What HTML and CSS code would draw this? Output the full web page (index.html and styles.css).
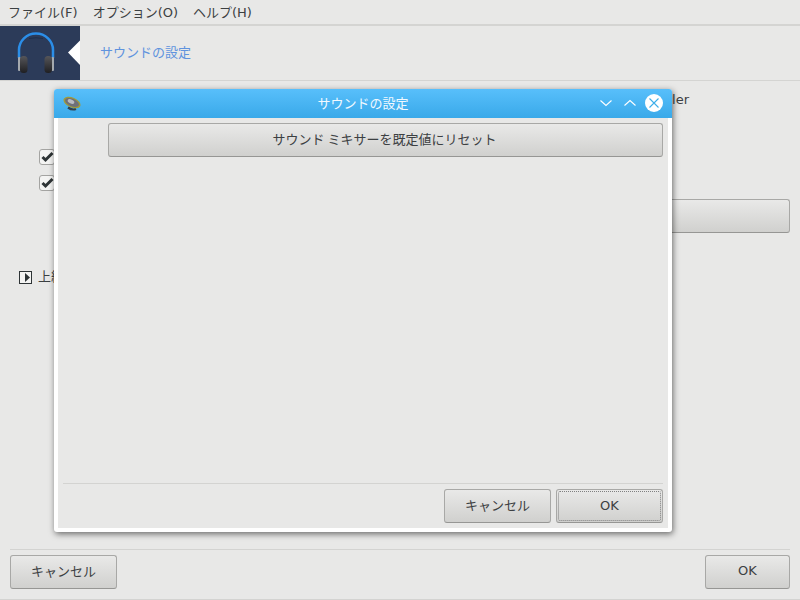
FILE: index.html
```html
<!DOCTYPE html>
<html lang="ja">
<head>
<meta charset="utf-8">
<title>サウンドの設定</title>
<link rel="stylesheet" href="styles.css">
</head>
<body>
<div class="app">
  <nav class="menubar">
    <span class="menu-item">ファイル(F)</span>
    <span class="menu-item">オプション(O)</span>
    <span class="menu-item">ヘルプ(H)</span>
  </nav>
  <header class="banner">
    <div class="logo">
      <svg class="logo-svg" width="80" height="54" viewBox="0 0 80 54">
        <defs>
          <linearGradient id="cup" x1="0" y1="0" x2="0" y2="1">
            <stop offset="0" stop-color="#56565a"/>
            <stop offset="1" stop-color="#1f1f22"/>
          </linearGradient>
        </defs>
        <path d="M19 32V24a17 16.500 0 0 1 34 0v8" fill="none" stroke="#2b8ee8" stroke-width="2.500"/>
        <path d="M29 12.500q7-1.500 14 0" fill="none" stroke="#1d2f4c" stroke-width="1"/>
        <rect x="18" y="31" width="2.500" height="14" rx="1" fill="#a4a9ae"/>
        <rect x="20" y="30" width="7.500" height="17" rx="3.500" fill="url(#cup)"/>
        <rect x="51.500" y="31" width="2.500" height="14" rx="1" fill="#a4a9ae"/>
        <rect x="44.500" y="30" width="7.500" height="17" rx="3.500" fill="url(#cup)"/>
        <path d="M80 14.500L68 26.500 80 39z" fill="#fff"/>
      </svg>
    </div>
    <div class="banner-title">サウンドの設定</div>
  </header>
  <main class="content">
    <div class="driver-line">ler</div>
    <div class="checks">
      <span class="check"><svg width="16" height="16" viewBox="0 0 16 16"><path d="M3.500 8l3 3L13.500 4" fill="none" stroke="#2e3436" stroke-width="3"/></svg></span>
      <span class="check"><svg width="16" height="16" viewBox="0 0 16 16"><path d="M3.500 8l3 3L13.500 4" fill="none" stroke="#2e3436" stroke-width="3"/></svg></span>
    </div>
    <div class="wide-row"><button class="btn wide-btn" type="button"></button></div>
    <div class="expander">
      <span class="expander-box"><svg width="13" height="13" viewBox="0 0 13 13"><path d="M6 2l5 4.500-5 4.500z" fill="#2e3436"/></svg></span>
      <span class="expander-label">上級</span>
    </div>
  </main>
  <footer class="footer">
    <div class="actions">
      <button class="btn action" type="button">キャンセル</button>
      <button class="btn action" type="button">OK</button>
    </div>
  </footer>
</div>

<section class="dialog">
  <div class="titlebar">
    <svg class="speaker" width="20" height="16" viewBox="0 0 20 16">
      <path d="M6 12.500q4 3 8 1.500" fill="none" stroke="#34414d" stroke-width="2.200"/>
      <ellipse cx="10" cy="7.500" rx="9" ry="5" transform="rotate(24 10 7.500)" fill="#a09a3c"/>
      <ellipse cx="10" cy="7.500" rx="7.500" ry="3.800" transform="rotate(24 10 7.500)" fill="#6f7078"/>
      <ellipse cx="9" cy="6.500" rx="3.500" ry="2" transform="rotate(24 9 6.500)" fill="#b9bbc2"/>
    </svg>
    <div class="dialog-title">サウンドの設定</div>
    <div class="win-controls">
      <svg width="14" height="10" viewBox="0 0 14 10"><path d="M1.500 2.500L7 7.500l5.500-5" fill="none" stroke="#fff" stroke-width="1.100"/></svg>
      <svg width="14" height="10" viewBox="0 0 14 10"><path d="M1.500 7.500L7 2.500l5.500 5" fill="none" stroke="#fff" stroke-width="1.100"/></svg>
      <svg class="win-close" width="18" height="18" viewBox="0 0 18 18"><circle cx="9" cy="9" r="9" fill="#fff"/><path d="M4.500 4.500l9 9M13.500 4.500l-9 9" stroke="#3daee9" stroke-width="1.100"/></svg>
    </div>
  </div>
  <div class="dialog-body">
    <button class="btn reset" type="button">サウンド ミキサーを既定値にリセット</button>
    <div class="dialog-spacer"></div>
    <div class="dialog-actions">
      <button class="btn action" type="button">キャンセル</button>
      <button class="btn action default" type="button"><span class="focus">OK</span></button>
    </div>
  </div>
</section>
</body>
</html>
```
FILE: styles.css
```css
* { box-sizing: border-box; }
html, body { margin: 0; padding: 0; }
body {
  width: 800px;
  height: 600px;
  overflow: hidden;
  background: #e8e8e7;
  color: #3c4042;
  font: 13px "DejaVu Sans", "Noto Sans CJK JP", sans-serif;
}
.app {
  position: relative;
  display: flex;
  flex-direction: column;
  height: 600px;
  border-bottom: 1px solid #d3d3d1;
}
.menubar {
  display: flex;
  gap: 15px;
  height: 26px;
  padding: 4px 8px 0;
  border-bottom: 2px solid #d4d4d2;
  line-height: 18px;
}
.banner {
  display: flex;
  align-items: center;
  height: 55px;
  border-bottom: 1px solid #d4d4d2;
}
.logo { width: 80px; height: 54px; background: #2c3b59; flex: none; }
.logo-svg { display: block; }
.banner-title { margin-left: 20px; padding-bottom: 4px; color: #5f93de; }
.content {
  flex: 1;
  display: flex;
  flex-direction: column;
  padding: 10px 10px 0;
}
.driver-line { height: 20px; padding-right: 101px; text-align: right; line-height: 18px; }
.checks {
  display: flex;
  flex-direction: column;
  gap: 10px;
  margin: 38px 0 0 29px;
}
.check {
  display: block;
  width: 16px;
  height: 16px;
  background: #f4f4f3;
  border: 1px solid #a4a4a2;
  border-radius: 3px;
}
.check svg { display: block; margin: -1px; }
.wide-row { margin-top: 8px; padding-left: 100px; }
.btn {
  display: block;
  padding: 0 0 4px;
  font: inherit;
  color: #3c4042;
  background: linear-gradient(#e9e9e8, #d0d0ce);
  border: 1px solid #a8a8a6;
  border-bottom-color: #969694;
  border-radius: 3px;
}
.wide-btn { width: 100%; height: 34px; }
.expander {
  display: flex;
  align-items: center;
  gap: 6px;
  margin: 37px 0 0 9px;
  height: 14px;
}
.expander-box {
  display: block;
  width: 13px;
  height: 13px;
  border: 1px solid #2e3436;
  background: #f4f4f3;
}
.expander-box svg { display: block; margin: -1px; }
.expander-label { padding-bottom: 4px; }
.footer { margin: 0 10px; height: 50px; border-top: 1px solid #d3d3d1; padding-top: 5px; }
.actions, .dialog-actions { display: flex; justify-content: space-between; }
.action { width: 107px; height: 34px; }
.actions .action:last-child { width: 85px; }

.dialog {
  position: absolute;
  left: 54px;
  top: 89px;
  width: 618px;
  height: 443px;
  display: flex;
  flex-direction: column;
  background: #fff;
  border-radius: 3px;
  box-shadow: 1px 2px 6px rgba(0, 0, 0, .55);
}
.titlebar {
  position: relative;
  display: flex;
  align-items: center;
  justify-content: center;
  flex: none;
  height: 29px;
  padding-bottom: 2px;
  background: linear-gradient(#58bffb, #39a9e9);
  border-radius: 3px 3px 0 0;
}
.speaker { position: absolute; left: 8px; top: 6px; }
.dialog-title { color: #f2f9ff; }
.win-controls {
  position: absolute;
  right: 9px;
  top: 5px;
  display: flex;
  align-items: center;
  gap: 10px;
  height: 18px;
}
.win-controls svg { display: block; }
.win-controls .win-close { margin-left: -2px; }
.dialog-body {
  flex: 1;
  display: flex;
  flex-direction: column;
  margin: 0 4px 4px;
  padding: 5px;
  background: #e8e8e7;
}
.reset { width: 555px; height: 34px; margin-left: 45px; padding-right: 2px; flex: none; word-spacing: -1px; }
.dialog-spacer { flex: 1; }
.dialog-actions {
  justify-content: flex-end;
  gap: 5px;
  border-top: 1px solid #d3d3d1;
  padding-top: 5px;
  flex: none;
}
.dialog-actions .action { flex: none; }
.default { padding: 1px; }
.focus {
  display: flex;
  align-items: center;
  justify-content: center;
  height: 100%;
  padding-bottom: 2px;
  border: 1px dotted #808080;
  border-radius: 2px;
}
```
